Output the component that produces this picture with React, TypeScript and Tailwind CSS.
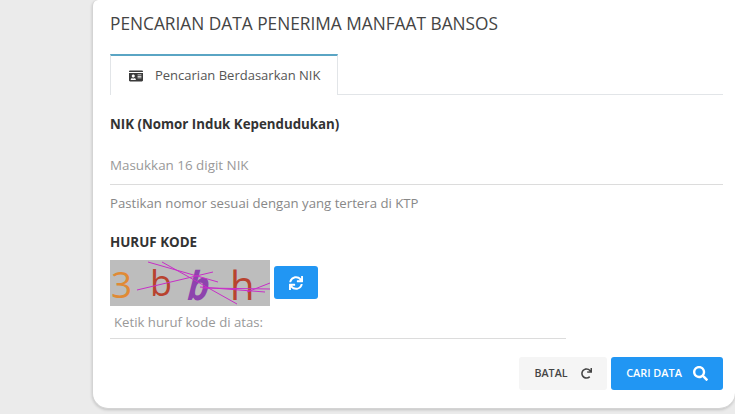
import React from "react";
import { FaIdCard, FaSync, FaRedo, FaSearch } from "react-icons/fa";

function Captcha() {
  return (
    <svg width="160" height="46" viewBox="0 0 160 46" className="block">
      <rect width="160" height="46" fill="#bdbdbd" />
      <text x="1" y="38" fontFamily="'Open Sans', sans-serif" fontSize="37" fill="#e08a35">3</text>
      <text x="40" y="36" fontFamily="'Open Sans', sans-serif" fontSize="36" fill="#b8432f">b</text>
      <text x="0" y="0" transform="translate(75 40) skewX(-14) scale(0.85 1)" fontFamily="'Open Sans', sans-serif" fontWeight="700" fontSize="40" fill="#8d44ad">b</text>
      <text x="120" y="40" fontFamily="'Open Sans', sans-serif" fontSize="40" fill="#b8432f">h</text>
      <g stroke="#c72fc7" strokeWidth="1" fill="none">
        <path d="M27 30 L103 12" />
        <path d="M38 2 L108 22" />
        <path d="M52 2 L127 44" />
        <path d="M90 27 L155 32" />
        <path d="M93 28 L160 29" />
        <path d="M137 32 L160 23" />
      </g>
    </svg>
  );
}

export default function App() {
  return (
    <div className="h-[414px] w-[735px] overflow-hidden bg-[#ebebeb] pl-[92px] font-['Open_Sans',sans-serif]">
      <div className="h-[409px] w-[643px] rounded-b-2xl rounded-tl-md border-l border-b border-[#d4d4d4] bg-white pl-[17px] pr-3 pt-[12px] shadow-[0_1px_3px_rgba(0,0,0,0.18)]">
        <h1 className="text-[17.3px] leading-6 font-normal text-[#444]">PENCARIAN DATA PENERIMA MANFAAT BANSOS</h1>

        <div className="mt-[18px] flex h-[41px] border-b border-[#e2e5e8]">
          <div className="flex h-[41px] w-[228px] items-center gap-[12px] border-x border-t-2 border-x-[#e2e5e8] border-t-[#5aa5c4] bg-white pl-[18px] text-[13px] text-[#555]">
            <FaIdCard className="text-[14px] text-[#3a3a3a]" />
            <span>Pencarian Berdasarkan NIK</span>
          </div>
        </div>

        <div className="mt-[20px] text-[13.3px] leading-[18px] font-bold text-[#333]">NIK (Nomor Induk Kependudukan)</div>
        <div className="mt-[18px] flex h-[34px] items-center border-b border-[#dcdcdc] pb-[5px] text-[13.4px] text-[#999]">Masukkan 16 digit NIK</div>
        <div className="mt-[9px] text-[13.2px] leading-[18px] text-[#888]">Pastikan nomor sesuai dengan yang tertera di KTP</div>

        <div className="mt-[21px] text-[13.4px] leading-[18px] font-bold text-[#333]">HURUF KODE</div>
        <div className="mt-[9px] flex items-start gap-1">
          <Captcha />
          <button className="mt-[6px] flex h-[33px] w-[44px] items-center justify-center rounded-[3px] bg-[#2196f3] text-white">
            <FaSync className="text-[14px]" />
          </button>
        </div>
        <div className="mt-[6px] flex h-[27px] w-[456px] items-center border-b border-[#dcdcdc] pb-[5px] pl-1 text-[13.2px] text-[#999]">Ketik huruf kode di atas:</div>

        <div className="mt-[18px] flex justify-end gap-1">
          <button className="flex h-[33px] w-[88px] items-center justify-center gap-[13px] rounded-[3px] bg-[#f5f5f5] text-[10.7px] font-semibold text-[#444]">
            BATAL <FaRedo className="text-[11px] text-[#444]" />
          </button>
          <button className="flex h-[33px] w-[112px] items-center justify-center gap-[11px] rounded-[3px] bg-[#2196f3] text-[10.9px] font-semibold text-white">
            CARI DATA <FaSearch className="text-[15px]" />
          </button>
        </div>
      </div>
    </div>
  );
}
